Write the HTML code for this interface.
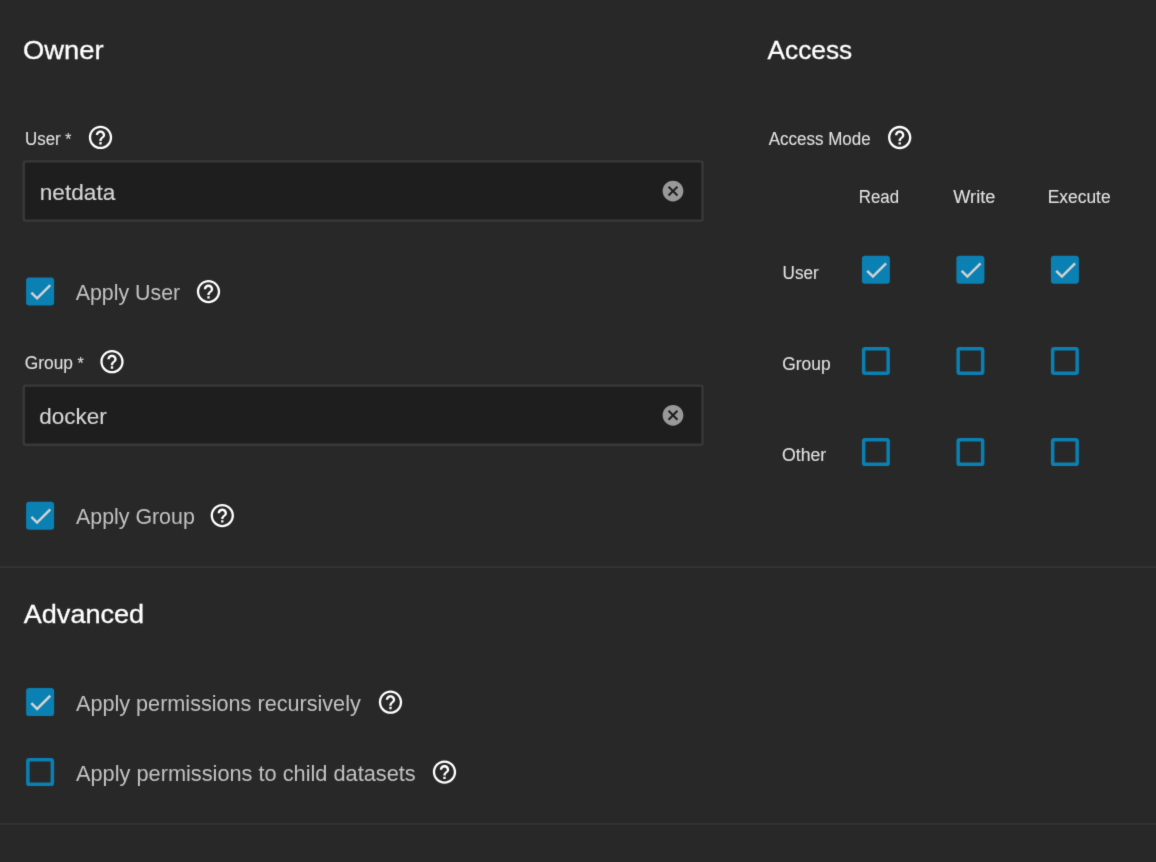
<!DOCTYPE html>
<html lang="en">
<head>
<meta charset="utf-8">
<title>Edit Permissions</title>
<style>
*{box-sizing:border-box;margin:0;padding:0}
html,body{width:1156px;height:862px;overflow:hidden;background:#282828}
body{position:relative;filter:url(#soft);font-family:"Liberation Sans",sans-serif;color:#dcdcdc;-webkit-font-smoothing:antialiased}
.t{position:absolute;white-space:nowrap;line-height:1;font-weight:400;transform-origin:0 50%}
.h{color:#fff;-webkit-text-stroke:0.3px #fff}
.lbl{color:#e2e2e2;-webkit-text-stroke:0.08px #e2e2e2}
.cbl{color:#c2c2c2}
.val{color:#d6d6d6;-webkit-text-stroke:0.15px #d6d6d6}
.req{position:absolute;left:100%;margin-left:5px;top:1px;font-size:.92em}
.ic{position:absolute;display:block;fill:#fff}
.ic.cancel{fill:#999}
.field{position:absolute;width:690px;height:68px}
.cb{position:absolute;width:34px;height:34px}
.cb svg,.field svg,.hr svg{display:block}
.defs{position:absolute;left:0;top:0}
.hr{position:absolute;left:0;width:1156px;height:4px}
</style>
</head>
<body>
<svg class="defs" width="0" height="0" aria-hidden="true"><filter id="soft" x="0" y="0" width="100%" height="100%" filterUnits="objectBoundingBox" color-interpolation-filters="sRGB"><feConvolveMatrix order="3" divisor="1" edgeMode="duplicate" preserveAlpha="true" kernelMatrix="0.0121 0.0858 0.0121 0.0858 0.6084 0.0858 0.0121 0.0858 0.0121"/></filter></svg>
<section class="owner">
<h2 id="t_owner" class="t h" style="left:22px;top:37.25px;font-size:26.4px;transform:translateX(1.00px) scaleX(1.0365)">Owner</h2>
<label id="t_user" class="t lbl" style="left:24px;top:129.75px;font-size:18.8px;transform:translateX(1.00px) scaleX(0.8997)">User<span class="req">*</span></label>
<svg class="ic help" style="left:85px;top:122px" width="32" height="32" viewBox="0 0 32 32"><path transform="translate(1.50 1.40) scale(1.1667)" d="M11 18h2v-2h-2v2zm1-16C6.48 2 2 6.48 2 12s4.48 10 10 10 10-4.48 10-10S17.52 2 12 2zm0 18c-4.41 0-8-3.59-8-8s3.59-8 8-8 8 3.59 8 8-3.59 8-8 8zm0-14c-2.21 0-4 1.79-4 4h2c0-1.1.9-2 2-2s2 .9 2 2c0 2-3 1.75-3 5h2c0-2.25 3-2.5 3-5 0-2.21-1.79-4-4-4z"/></svg>
<div class="field" style="left:20px;top:158px"><svg width="690" height="68" viewBox="0 0 690 68"><rect x="3.75" y="3.40" width="678.80" height="59.15" rx="2" fill="#1e1e1e" stroke="#393939" stroke-width="2.33"/></svg></div>
<span id="t_netdata" class="t val" style="left:39px;top:181.75px;font-size:22.0px;transform:translateX(0.75px) scaleX(1.0286)">netdata</span>
<svg class="ic cancel" style="left:659px;top:177px" width="29" height="29" viewBox="0 0 29 29"><path transform="translate(1.55 1.65) scale(1.0375)" d="M12 2C6.47 2 2 6.47 2 12s4.47 10 10 10 10-4.47 10-10S17.53 2 12 2zm5 13.59L15.59 17 12 13.41 8.41 17 7 15.59 10.59 12 7 8.41 8.41 7 12 10.59 15.59 7 17 8.41 13.41 12 17 15.59z"/></svg>
<span class="cb on" style="left:24px;top:275px"><svg width="34" height="34" viewBox="0 0 34 34"><rect x="2.10" y="2.50" width="28.0" height="28.0" rx="3.2" fill="#0b80b3"/><path transform="translate(2.60 2.80) scale(1.1667)" d="M4.1,12.7 9,17.6 20.3,6.3" fill="none" stroke="#d2d2d2" stroke-width="2.13"/></svg></span>
<label id="t_applyuser" class="t cbl" style="left:75px;top:282.00px;font-size:21.8px;transform:translateX(0.75px) scaleX(0.9799)">Apply User</label>
<svg class="ic help" style="left:193px;top:276px" width="32" height="32" viewBox="0 0 32 32"><path transform="translate(1.50 1.60) scale(1.1667)" d="M11 18h2v-2h-2v2zm1-16C6.48 2 2 6.48 2 12s4.48 10 10 10 10-4.48 10-10S17.52 2 12 2zm0 18c-4.41 0-8-3.59-8-8s3.59-8 8-8 8 3.59 8 8-3.59 8-8 8zm0-14c-2.21 0-4 1.79-4 4h2c0-1.1.9-2 2-2s2 .9 2 2c0 2-3 1.75-3 5h2c0-2.25 3-2.5 3-5 0-2.21-1.79-4-4-4z"/></svg>
<label id="t_group" class="t lbl" style="left:24px;top:353.75px;font-size:18.8px;transform:translateX(0.75px) scaleX(0.9234)">Group<span class="req">*</span></label>
<svg class="ic help" style="left:97px;top:346px" width="32" height="32" viewBox="0 0 32 32"><path transform="translate(1.00 1.70) scale(1.1667)" d="M11 18h2v-2h-2v2zm1-16C6.48 2 2 6.48 2 12s4.48 10 10 10 10-4.48 10-10S17.52 2 12 2zm0 18c-4.41 0-8-3.59-8-8s3.59-8 8-8 8 3.59 8 8-3.59 8-8 8zm0-14c-2.21 0-4 1.79-4 4h2c0-1.1.9-2 2-2s2 .9 2 2c0 2-3 1.75-3 5h2c0-2.25 3-2.5 3-5 0-2.21-1.79-4-4-4z"/></svg>
<div class="field" style="left:20px;top:382px"><svg width="690" height="68" viewBox="0 0 690 68"><rect x="3.75" y="3.60" width="678.80" height="59.15" rx="2" fill="#1e1e1e" stroke="#393939" stroke-width="2.33"/></svg></div>
<span id="t_docker" class="t val" style="left:39px;top:406.00px;font-size:22.0px;transform:translateX(0.25px) scaleX(1.0202)">docker</span>
<svg class="ic cancel" style="left:659px;top:401px" width="29" height="29" viewBox="0 0 29 29"><path transform="translate(1.55 1.85) scale(1.0375)" d="M12 2C6.47 2 2 6.47 2 12s4.47 10 10 10 10-4.47 10-10S17.53 2 12 2zm5 13.59L15.59 17 12 13.41 8.41 17 7 15.59 10.59 12 7 8.41 8.41 7 12 10.59 15.59 7 17 8.41 13.41 12 17 15.59z"/></svg>
<span class="cb on" style="left:24px;top:499px"><svg width="34" height="34" viewBox="0 0 34 34"><rect x="2.10" y="2.70" width="28.0" height="28.0" rx="3.2" fill="#0b80b3"/><path transform="translate(2.60 3.00) scale(1.1667)" d="M4.1,12.7 9,17.6 20.3,6.3" fill="none" stroke="#d2d2d2" stroke-width="2.13"/></svg></span>
<label id="t_applygroup" class="t cbl" style="left:75px;top:506.00px;font-size:21.8px;transform:translateX(1.00px) scaleX(0.9802)">Apply Group</label>
<svg class="ic help" style="left:207px;top:500px" width="32" height="32" viewBox="0 0 32 32"><path transform="translate(1.30 1.60) scale(1.1667)" d="M11 18h2v-2h-2v2zm1-16C6.48 2 2 6.48 2 12s4.48 10 10 10 10-4.48 10-10S17.52 2 12 2zm0 18c-4.41 0-8-3.59-8-8s3.59-8 8-8 8 3.59 8 8-3.59 8-8 8zm0-14c-2.21 0-4 1.79-4 4h2c0-1.1.9-2 2-2s2 .9 2 2c0 2-3 1.75-3 5h2c0-2.25 3-2.5 3-5 0-2.21-1.79-4-4-4z"/></svg>
</section>
<section class="access">
<h2 id="t_access" class="t h" style="left:767px;top:37.00px;font-size:26.4px;transform:translateX(0.50px) scaleX(0.9952)">Access</h2>
<label id="t_amode" class="t lbl" style="left:768px;top:129.75px;font-size:18.8px;transform:translateX(0.75px) scaleX(0.9038)">Access Mode</label>
<svg class="ic help" style="left:884px;top:122px" width="32" height="32" viewBox="0 0 32 32"><path transform="translate(1.70 1.50) scale(1.1667)" d="M11 18h2v-2h-2v2zm1-16C6.48 2 2 6.48 2 12s4.48 10 10 10 10-4.48 10-10S17.52 2 12 2zm0 18c-4.41 0-8-3.59-8-8s3.59-8 8-8 8 3.59 8 8-3.59 8-8 8zm0-14c-2.21 0-4 1.79-4 4h2c0-1.1.9-2 2-2s2 .9 2 2c0 2-3 1.75-3 5h2c0-2.25 3-2.5 3-5 0-2.21-1.79-4-4-4z"/></svg>
<span id="t_read" class="t lbl" style="left:858px;top:187.75px;font-size:18.8px;transform:translateX(0.75px) scaleX(0.8969)">Read</span>
<span id="t_write" class="t lbl" style="left:953px;top:187.75px;font-size:18.8px;transform:translateX(0.25px) scaleX(0.9679)">Write</span>
<span id="t_exec" class="t lbl" style="left:1047px;top:187.75px;font-size:18.8px;transform:translateX(0.75px) scaleX(0.9266)">Execute</span>
<span id="t_ruser" class="t lbl" style="left:782px;top:263.75px;font-size:18.8px;transform:translateX(0.50px) scaleX(0.9127)">User</span>
<span class="cb on" style="left:859px;top:253px"><svg width="34" height="34" viewBox="0 0 34 34"><rect x="2.90" y="2.70" width="28.0" height="28.0" rx="3.2" fill="#0b80b3"/><path transform="translate(3.40 3.00) scale(1.1667)" d="M4.1,12.7 9,17.6 20.3,6.3" fill="none" stroke="#d2d2d2" stroke-width="2.13"/></svg></span>
<span class="cb on" style="left:954px;top:253px"><svg width="34" height="34" viewBox="0 0 34 34"><rect x="2.40" y="2.70" width="28.0" height="28.0" rx="3.2" fill="#0b80b3"/><path transform="translate(2.90 3.00) scale(1.1667)" d="M4.1,12.7 9,17.6 20.3,6.3" fill="none" stroke="#d2d2d2" stroke-width="2.13"/></svg></span>
<span class="cb on" style="left:1048px;top:253px"><svg width="34" height="34" viewBox="0 0 34 34"><rect x="2.90" y="2.70" width="28.0" height="28.0" rx="3.2" fill="#0b80b3"/><path transform="translate(3.40 3.00) scale(1.1667)" d="M4.1,12.7 9,17.6 20.3,6.3" fill="none" stroke="#d2d2d2" stroke-width="2.13"/></svg></span>
<span id="t_rgroup" class="t lbl" style="left:782px;top:354.75px;font-size:18.8px;transform:translateX(0.25px) scaleX(0.9269)">Group</span>
<span class="cb" style="left:859px;top:344px"><svg width="34" height="34" viewBox="0 0 34 34"><rect x="4.65" y="4.65" width="24.5" height="24.5" rx="1.45" fill="none" stroke="#0b80b3" stroke-width="3.5"/></svg></span>
<span class="cb" style="left:954px;top:344px"><svg width="34" height="34" viewBox="0 0 34 34"><rect x="4.15" y="4.65" width="24.5" height="24.5" rx="1.45" fill="none" stroke="#0b80b3" stroke-width="3.5"/></svg></span>
<span class="cb" style="left:1048px;top:344px"><svg width="34" height="34" viewBox="0 0 34 34"><rect x="4.65" y="4.65" width="24.5" height="24.5" rx="1.45" fill="none" stroke="#0b80b3" stroke-width="3.5"/></svg></span>
<span id="t_rother" class="t lbl" style="left:782px;top:445.75px;font-size:18.8px;transform:translateX(0.00px) scaleX(0.9415)">Other</span>
<span class="cb" style="left:859px;top:436px"><svg width="34" height="34" viewBox="0 0 34 34"><rect x="4.65" y="3.85" width="24.5" height="24.5" rx="1.45" fill="none" stroke="#0b80b3" stroke-width="3.5"/></svg></span>
<span class="cb" style="left:954px;top:436px"><svg width="34" height="34" viewBox="0 0 34 34"><rect x="4.15" y="3.85" width="24.5" height="24.5" rx="1.45" fill="none" stroke="#0b80b3" stroke-width="3.5"/></svg></span>
<span class="cb" style="left:1048px;top:436px"><svg width="34" height="34" viewBox="0 0 34 34"><rect x="4.65" y="3.85" width="24.5" height="24.5" rx="1.45" fill="none" stroke="#0b80b3" stroke-width="3.5"/></svg></span>
</section>
<div class="hr" style="top:565px"><svg width="1156" height="4" viewBox="0 0 1156 4"><rect x="0" y="1.30" width="1156" height="1.6" fill="#363636"/></svg></div>
<section class="advanced">
<h2 id="t_adv" class="t h" style="left:23px;top:601.25px;font-size:26.4px;transform:translateX(0.75px) scaleX(1.0255)">Advanced</h2>
<span class="cb on" style="left:24px;top:686px"><svg width="34" height="34" viewBox="0 0 34 34"><rect x="2.10" y="2.10" width="28.0" height="28.0" rx="3.2" fill="#0b80b3"/><path transform="translate(2.60 2.40) scale(1.1667)" d="M4.1,12.7 9,17.6 20.3,6.3" fill="none" stroke="#d2d2d2" stroke-width="2.13"/></svg></span>
<label id="t_rec" class="t cbl" style="left:75px;top:692.75px;font-size:21.8px;transform:translateX(1.00px) scaleX(0.9919)">Apply permissions recursively</label>
<svg class="ic help" style="left:375px;top:687px" width="32" height="32" viewBox="0 0 32 32"><path transform="translate(1.50 1.20) scale(1.1667)" d="M11 18h2v-2h-2v2zm1-16C6.48 2 2 6.48 2 12s4.48 10 10 10 10-4.48 10-10S17.52 2 12 2zm0 18c-4.41 0-8-3.59-8-8s3.59-8 8-8 8 3.59 8 8-3.59 8-8 8zm0-14c-2.21 0-4 1.79-4 4h2c0-1.1.9-2 2-2s2 .9 2 2c0 2-3 1.75-3 5h2c0-2.25 3-2.5 3-5 0-2.21-1.79-4-4-4z"/></svg>
<span class="cb" style="left:24px;top:756px"><svg width="34" height="34" viewBox="0 0 34 34"><rect x="3.85" y="3.85" width="24.5" height="24.5" rx="1.45" fill="none" stroke="#0b80b3" stroke-width="3.5"/></svg></span>
<label id="t_child" class="t cbl" style="left:75px;top:762.75px;font-size:21.8px;transform:translateX(1.00px) scaleX(0.9979)">Apply permissions to child datasets</label>
<svg class="ic help" style="left:429px;top:757px" width="32" height="32" viewBox="0 0 32 32"><path transform="translate(1.50 1.10) scale(1.1667)" d="M11 18h2v-2h-2v2zm1-16C6.48 2 2 6.48 2 12s4.48 10 10 10 10-4.48 10-10S17.52 2 12 2zm0 18c-4.41 0-8-3.59-8-8s3.59-8 8-8 8 3.59 8 8-3.59 8-8 8zm0-14c-2.21 0-4 1.79-4 4h2c0-1.1.9-2 2-2s2 .9 2 2c0 2-3 1.75-3 5h2c0-2.25 3-2.5 3-5 0-2.21-1.79-4-4-4z"/></svg>
</section>
<div class="hr" style="top:822px"><svg width="1156" height="4" viewBox="0 0 1156 4"><rect x="0" y="1.10" width="1156" height="1.6" fill="#363636"/></svg></div>
</body>
</html>
